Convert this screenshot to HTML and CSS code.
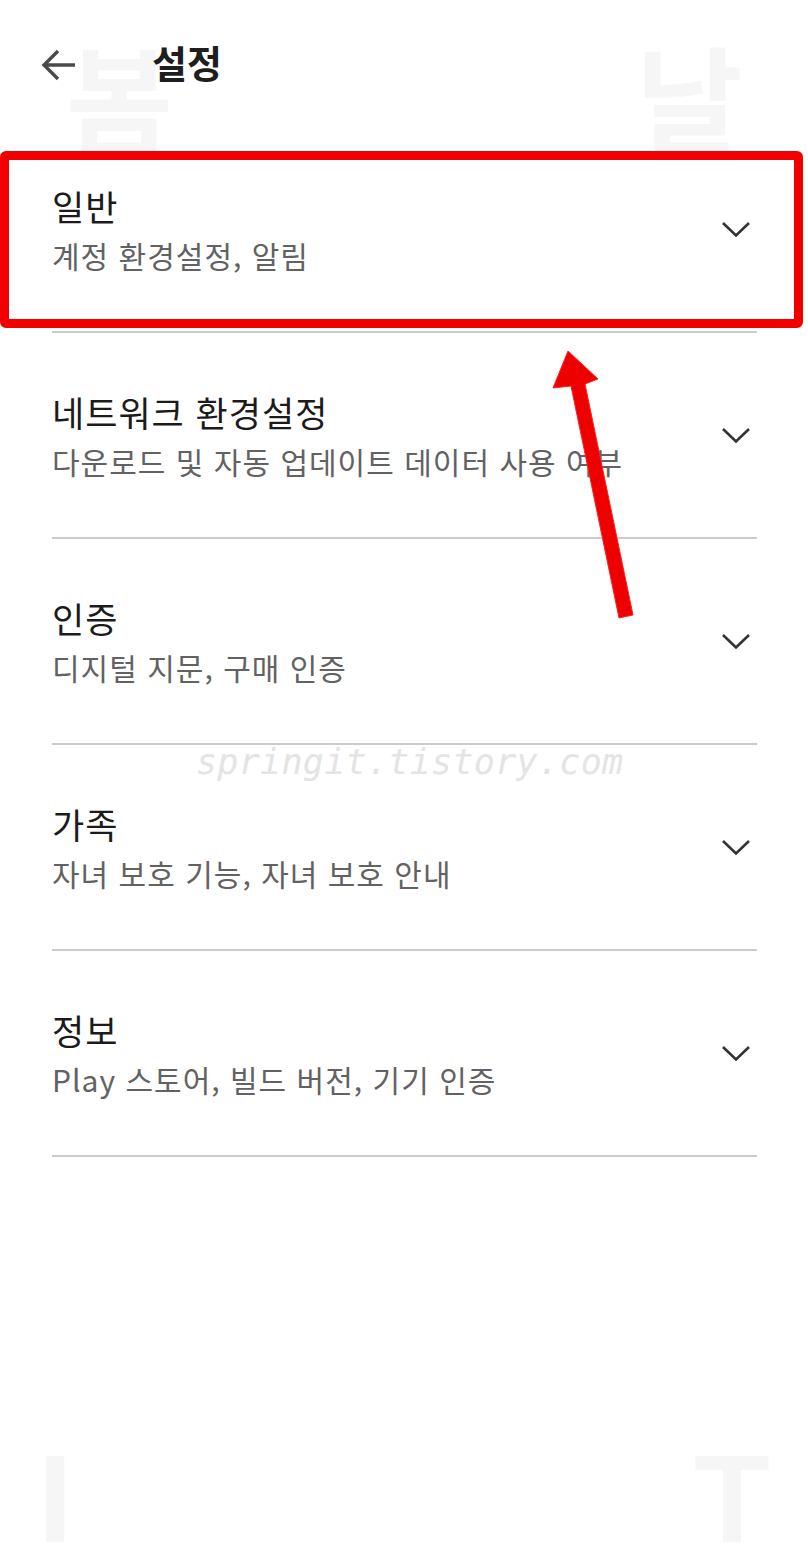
FILE: index.html
```html
<!DOCTYPE html>
<html lang="ko">
<head>
<meta charset="utf-8">
<title>설정</title>
<link rel="stylesheet" href="styles.css">
</head>
<body>
<div class="page">
  <div class="wm wm-tl">봄</div>
  <div class="wm wm-tr">날</div>
  <div class="wm wm-bl">I</div>
  <div class="wm wm-br">T</div>

  <header class="header">
    <svg class="back" width="40" height="36" viewBox="0 0 40 36">
      <path d="M6 18H37M20 4L6 18L20 32" fill="none" stroke="#4a4a4a" stroke-width="3.4" stroke-linecap="butt" stroke-linejoin="miter"/>
    </svg>
    <h1 class="title">설정</h1>
  </header>

  <ul class="list">
    <li class="row">
      <div class="text">
        <div class="row-title">일반</div>
        <div class="row-sub">계정 환경설정, 알림</div>
      </div>
      <svg class="chev" width="30" height="18" viewBox="0 0 30 18"><path d="M2 3L15 15.5L28 3" fill="none" stroke="#333" stroke-width="2.6"/></svg>
    </li>
    <li class="row">
      <div class="text">
        <div class="row-title">네트워크 환경설정</div>
        <div class="row-sub">다운로드 및 자동 업데이트 데이터 사용 여부</div>
      </div>
      <svg class="chev" width="30" height="18" viewBox="0 0 30 18"><path d="M2 3L15 15.5L28 3" fill="none" stroke="#333" stroke-width="2.6"/></svg>
    </li>
    <li class="row">
      <div class="text">
        <div class="row-title">인증</div>
        <div class="row-sub">디지털 지문, 구매 인증</div>
      </div>
      <svg class="chev" width="30" height="18" viewBox="0 0 30 18"><path d="M2 3L15 15.5L28 3" fill="none" stroke="#333" stroke-width="2.6"/></svg>
    </li>
    <li class="row">
      <div class="text">
        <div class="row-title">가족</div>
        <div class="row-sub">자녀 보호 기능, 자녀 보호 안내</div>
      </div>
      <svg class="chev" width="30" height="18" viewBox="0 0 30 18"><path d="M2 3L15 15.5L28 3" fill="none" stroke="#333" stroke-width="2.6"/></svg>
    </li>
    <li class="row">
      <div class="text">
        <div class="row-title">정보</div>
        <div class="row-sub">Play 스토어, 빌드 버전, 기기 인증</div>
      </div>
      <svg class="chev" width="30" height="18" viewBox="0 0 30 18"><path d="M2 3L15 15.5L28 3" fill="none" stroke="#333" stroke-width="2.6"/></svg>
    </li>
  </ul>

  <div class="watermark">springit.tistory.com</div>

  <div class="highlight"></div>
  <svg class="arrow" width="808" height="700" viewBox="0 0 808 700">
    <path d="M619 618L633 615L585 384L598 379L568 351L553 388L571 386Z" fill="#ee0000" stroke="#ff2020" stroke-width="1"/>
  </svg>
</div>
</body>
</html>
```
FILE: styles.css
```css
* { box-sizing: border-box; }
html, body { margin: 0; padding: 0; background: #fff; }
body {
  font-family: "Noto Sans CJK KR", "Noto Sans", sans-serif;
  color: #222;
}
.page {
  position: relative;
  width: 808px;
  height: 1563px;
  overflow: hidden;
}
.wm {
  position: absolute;
  font-family: "Noto Sans CJK KR", sans-serif;
  font-weight: 700;
  color: #f6f6f6;
  line-height: 1;
  z-index: 0;
}
.wm-tl { left: 66px; top: 36px; font-size: 116px; }
.wm-tr { left: 636px; top: 36px; font-size: 116px; }
.wm-bl { left: 38px; top: 1453px; font-size: 124px; line-height: 0.75; font-family: "Liberation Sans", sans-serif; }
.wm-br { left: 694px; top: 1453px; font-size: 124px; line-height: 0.75; font-family: "Liberation Sans", sans-serif; }

.header {
  position: relative;
  z-index: 1;
  height: 127px;
  display: flex;
  align-items: flex-start;
  padding: 43px 0 0 38px;
  gap: 74px;
}
.back { display: block; margin-top: 4px; }
.title {
  margin: 0;
  font-size: 38px;
  font-weight: 700;
  color: #1e1e1e;
  line-height: 1;
}
.list {
  position: relative;
  z-index: 1;
  list-style: none;
  margin: 0;
  padding: 0 51px 0 52px;
}
.row {
  height: 206px;
  border-bottom: 2px solid #cbcbcb;
  display: flex;
  align-items: center;
  justify-content: space-between;
  padding-right: 6px;
}
.text {
  display: flex;
  flex-direction: column;
  gap: 17px;
}
.row-title {
  font-size: 35px;
  line-height: 1;
  letter-spacing: 1px;
  color: #1b1b1b;
}
.row-sub {
  font-size: 30px;
  line-height: 1;
  letter-spacing: 1px;
  color: #626262;
}
.chev { display: block; }

.watermark {
  position: absolute;
  z-index: 2;
  left: 196px;
  top: 742px;
  font-family: "DejaVu Sans Mono", monospace;
  font-style: italic;
  font-size: 35px;
  color: #e4e4e4;
  letter-spacing: 0.3px;
}
.highlight {
  position: absolute;
  z-index: 3;
  left: 0;
  top: 151px;
  width: 803px;
  height: 177px;
  border: 9px solid #f20000;
  border-radius: 6px;
}
.arrow {
  position: absolute;
  z-index: 3;
  left: 0;
  top: 0;
}
```
